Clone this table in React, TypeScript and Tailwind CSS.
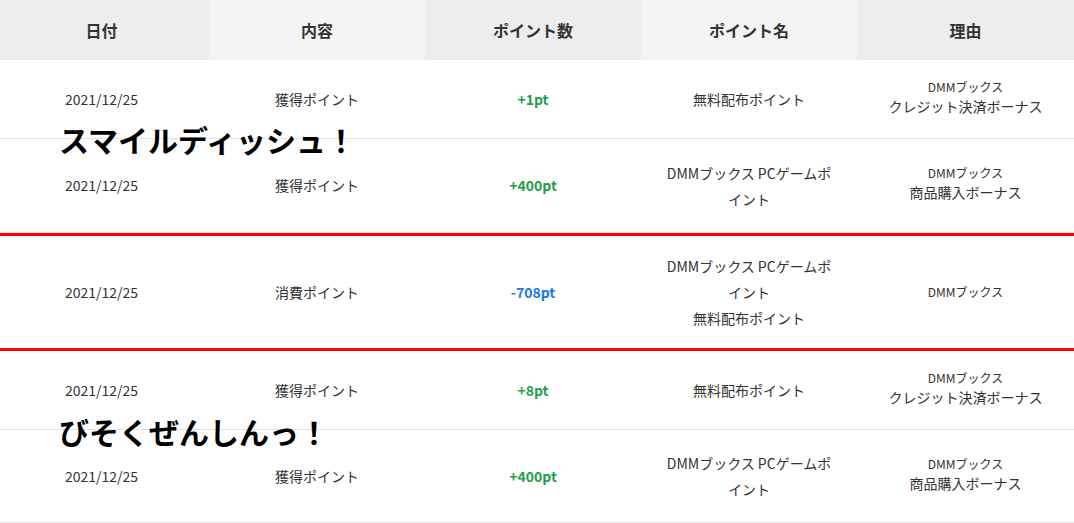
import React from "react";

type Row = {
  date: string;
  kind: string;
  points: string;
  color: "green" | "blue";
  name: string;
  reasonTop: string;
  reasonBottom?: string;
  rowCls: string;
};

const rows: Row[] = [
  {
    date: "2021/12/25",
    kind: "獲得ポイント",
    points: "+1pt",
    color: "green",
    name: "無料配布ポイント",
    reasonTop: "DMMブックス",
    reasonBottom: "クレジット決済ボーナス",
    rowCls: "h-[79px] border-b border-[#e3e3e3]",
  },
  {
    date: "2021/12/25",
    kind: "獲得ポイント",
    points: "+400pt",
    color: "green",
    name: "DMMブックス PCゲームポイント",
    reasonTop: "DMMブックス",
    reasonBottom: "商品購入ボーナス",
    rowCls: "h-[94px] border-b border-[#e3e3e3]",
  },
  {
    date: "2021/12/25",
    kind: "消費ポイント",
    points: "-708pt",
    color: "blue",
    name: "DMMブックス PCゲームポイント\n無料配布ポイント",
    reasonTop: "DMMブックス",
    rowCls: "h-[118px] border-y-[3px] border-[#ff0000]",
  },
  {
    date: "2021/12/25",
    kind: "獲得ポイント",
    points: "+8pt",
    color: "green",
    name: "無料配布ポイント",
    reasonTop: "DMMブックス",
    reasonBottom: "クレジット決済ボーナス",
    rowCls: "h-[79px] border-b border-[#e3e3e3]",
  },
  {
    date: "2021/12/25",
    kind: "獲得ポイント",
    points: "+400pt",
    color: "green",
    name: "DMMブックス PCゲームポイント",
    reasonTop: "DMMブックス",
    reasonBottom: "商品購入ボーナス",
    rowCls: "h-[93px] border-b border-[#e3e3e3]",
  },
];

const cols = "grid grid-cols-[209px_216px_216px_216px_217px]";

function DataRow({ r }: { r: Row }) {
  const names = r.name.split("\n");
  return (
    <div className={`${cols} items-center text-[14px] text-[#333] ${r.rowCls}`}>
      <div className="pr-[6px] text-center">{r.date}</div>
      <div className="text-center">{r.kind}</div>
      <div
        className={`text-center text-[14px] font-bold ${
          r.color === "green" ? "text-[#1f9e4c]" : "text-[#1a78f0]"
        }`}
      >
        {r.points}
      </div>
      <div className="px-[20px] text-center leading-[26px]">
        {names.map((n, i) => (
          <div key={i}>{n}</div>
        ))}
      </div>
      <div className={`text-center ${r.reasonBottom ? "pb-[5px]" : ""}`}>
        <div className="text-[12px] leading-[18px]">{r.reasonTop}</div>
        {r.reasonBottom && (
          <div className="text-[14px] leading-[20px]">{r.reasonBottom}</div>
        )}
      </div>
    </div>
  );
}

export default function App() {
  return (
    <div
      className="relative w-[1074px] h-[523px] overflow-hidden bg-white"
      style={{ fontFamily: '"Noto Sans CJK JP", "Noto Sans", sans-serif' }}
    >
      <div className={`${cols} h-[60px] items-center text-[16px] font-bold text-[#333]`}>
        <div className="flex h-full items-center justify-center bg-[#ededed] pr-[6px]">日付</div>
        <div className="flex h-full items-center justify-center bg-[#f4f4f4]">内容</div>
        <div className="flex h-full items-center justify-center bg-[#ededed]">ポイント数</div>
        <div className="flex h-full items-center justify-center bg-[#f4f4f4]">ポイント名</div>
        <div className="flex h-full items-center justify-center bg-[#ededed]">理由</div>
      </div>
      {rows.map((r, i) => (
        <DataRow key={i} r={r} />
      ))}
      <div className="absolute left-[59px] top-[119px] text-[30px] font-bold leading-[40px] text-black">
        スマイルディッシュ！
      </div>
      <div className="absolute left-[59px] top-[411px] text-[30px] font-bold leading-[40px] text-black">
        びそくぜんしんっ！
      </div>
    </div>
  );
}
